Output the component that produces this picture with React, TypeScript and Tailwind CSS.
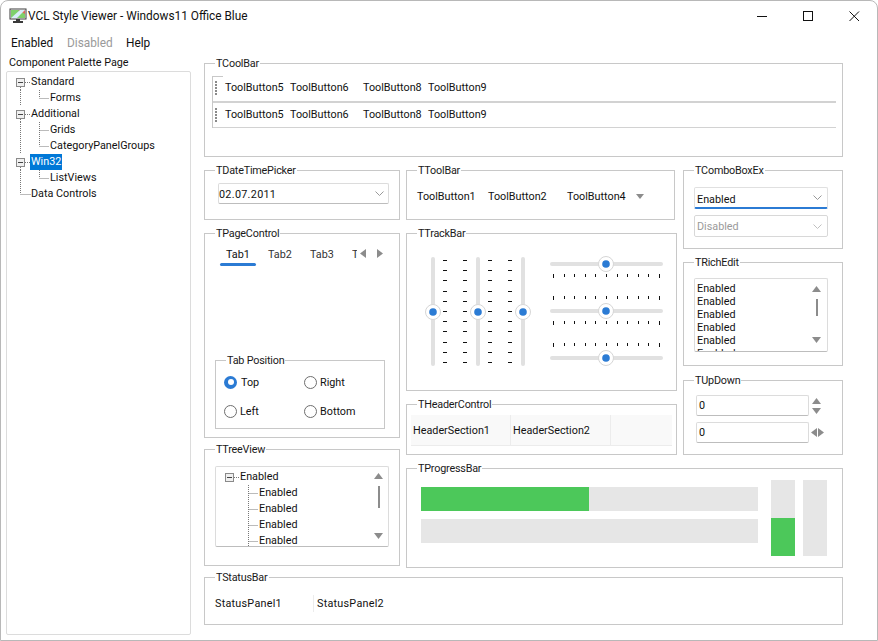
import React from "react";

function Group({ title, className, children }: { title: string; className: string; children?: React.ReactNode }) {
  return (
    <div className={`relative border border-[#c8c8c8] ${className}`}>
      <span className="absolute left-[10px] top-[-8px] h-[15px] bg-white px-px text-[10.8px] leading-[15px] tracking-[-0.2px] text-[#1a1a1a]">{title}</span>
      {children}
    </div>
  );
}

function Expander() {
  return (
    <g>
      <rect x="0.5" y="3.5" width="8" height="8" fill="#f0f0f0" stroke="#8a8a8a" />
      <line x1="2" y1="7.5" x2="7" y2="7.5" stroke="#444" />
    </g>
  );
}

const Dots = (p: { x1: number; y1: number; x2: number; y2: number }) => (
  <line {...p} stroke="#777" strokeDasharray="1 1" />
);

function RootRow({ label, selected, line, last, indent = 9, w = 24 }: { label: string; selected?: boolean; line?: boolean; last?: boolean; indent?: number; w?: number }) {
  return (
    <div className="flex h-4 items-center">
      <svg width={w} height="16" className="shrink-0">
        {last ? (
          <>
            <Dots x1={13.5} y1={0} x2={13.5} y2={8} />
            <Dots x1={13.5} y1={8.5} x2={w} y2={8.5} />
          </>
        ) : (
          <>
            {line && <Dots x1={13.5} y1={13} x2={13.5} y2={16} />}
            <Dots x1={18} y1={8.5} x2={w} y2={8.5} />
            <g transform={`translate(${indent} 1)`}><Expander /></g>
          </>
        )}
      </svg>
      <span className={`h-4 text-[10.8px] leading-4 ${selected ? "bg-[#0078d7] px-px text-white" : "text-[#111]"}`}>{label}</span>
    </div>
  );
}

function ChildRow({ label, outer, w = 43, inner = 32.5, outerX = 13.5, end }: { label: string; outer?: boolean; w?: number; inner?: number; outerX?: number; end?: boolean }) {
  return (
    <div className="flex h-4 items-center">
      <svg width={w} height="16" className="shrink-0">
        {outer && <Dots x1={outerX} y1={0} x2={outerX} y2={16} />}
        <Dots x1={inner} y1={0} x2={inner} y2={end ? 8 : 16} />
        <Dots x1={inner} y1={8.5} x2={w - 1} y2={8.5} />
      </svg>
      <span className="text-[10.8px] leading-4 text-[#111]">{label}</span>
    </div>
  );
}

function Chevron({ color = "#999999" }: { color?: string }) {
  return (
    <svg width="9" height="5" viewBox="0 0 9 5" className="shrink-0">
      <path d="M0.5 0.5 L4.5 4.5 L8.5 0.5" fill="none" stroke={color} />
    </svg>
  );
}

function Tri({ dir, className = "" }: { dir: "up" | "down" | "left" | "right"; className?: string }) {
  const vertical = dir === "up" || dir === "down";
  const w = vertical ? 9 : 6;
  const h = vertical ? 6 : 9;
  const d = {
    up: "M4.5 0 L9 6 L0 6 Z",
    down: "M0 0 L9 0 L4.5 6 Z",
    left: "M6 0 L6 9 L0 4.5 Z",
    right: "M0 0 L6 4.5 L0 9 Z",
  }[dir];
  return (
    <svg width={w} height={h} viewBox={`0 0 ${w} ${h}`} className={`shrink-0 ${className}`}>
      <path d={d} fill="#8c8c8c" />
    </svg>
  );
}

function Radio({ label, checked, className }: { label: string; checked?: boolean; className: string }) {
  return (
    <div className={`flex items-center ${className}`}>
      <span className={`flex h-[13px] w-[13px] shrink-0 items-center justify-center rounded-full ${checked ? "bg-[#2b7bd4]" : "border border-[#6e6e6e] bg-white"}`}>
        {checked && <span className="h-[6px] w-[6px] rounded-full bg-white" />}
      </span>
      <span className={`mt-[2px] text-[10.8px] leading-4 text-[#111] ${checked ? "ml-[4px]" : "ml-[3px]"}`}>{label}</span>
    </div>
  );
}

function Thumb({ cx, cy }: { cx: number; cy: number }) {
  return (
    <g>
      <circle cx={cx} cy={cy} r="7.5" fill="#fff" stroke="#d6d6d6" />
      <circle cx={cx} cy={cy} r="3.8" fill="#2b7bd4" />
    </g>
  );
}

function VerticalTracks() {
  const ys = [260, 270, 280, 291, 301, 311, 321, 331, 342, 352, 362];
  const tickXs = [443, 463, 488, 508];
  return (
    <svg width="112" height="125" viewBox="424 250 112 125" className="shrink-0">
      {[433, 478, 523].map((x) => (
        <rect key={x} x={x - 2} y="257" width="4" height="109" rx="2" fill="#e1e1e1" />
      ))}
      {tickXs.map((x) => ys.map((y) => <rect key={`${x}-${y}`} x={x} y={y} width="4" height="1" fill="#111" />))}
      {[433, 478, 523].map((x) => (
        <Thumb key={x} cx={x} cy={312} />
      ))}
    </svg>
  );
}

function HorizontalTracks() {
  const xs = [553, 564, 574, 585, 595, 606, 617, 627, 638, 648, 659];
  const rows = [274, 296, 321, 343];
  return (
    <svg width="124" height="125" viewBox="545 250 124 125" className="shrink-0">
      {[264, 311, 358].map((y) => (
        <rect key={y} x="550" y={y - 2} width="113" height="4" rx="2" fill="#e1e1e1" />
      ))}
      {rows.map((y) =>
        xs.map((x, i) => <rect key={`${x}-${y}`} x={x} y={y} width="1" height={i === 0 || i === 10 ? 4 : 3} fill="#111" />),
      )}
      {[264, 311, 358].map((y) => (
        <Thumb key={y} cx={606} cy={y} />
      ))}
    </svg>
  );
}

function ToolButtons() {
  return (
    <div className="flex text-[10.8px] leading-4 text-[#111]">
      <span className="w-[65px]">ToolButton5</span>
      <span className="w-[73px]">ToolButton6</span>
      <span className="w-[65px]">ToolButton8</span>
      <span>ToolButton9</span>
    </div>
  );
}

function Grip() {
  return (
    <svg width="2" height="15" className="ml-[2px] mr-[8px] shrink-0">
      <line x1="1" y1="0" x2="1" y2="15" stroke="#8a8a8a" strokeWidth="2" strokeDasharray="2 1" />
    </svg>
  );
}

function AppIcon() {
  return (
    <svg width="18" height="16" viewBox="0 0 18 16" className="shrink-0">
      <rect x="1" y="1" width="16" height="10" fill="#ffffff" stroke="#3a3a3a" />
      <path d="M2 2 H16 V10 H2 Z" fill="#7fd06a" />
      <path d="M9 2 H16 V6 Z" fill="#e0685a" />
      <path d="M2 10 L11 2 H16 L8 10 Z" fill="#d8ecf8" />
      <rect x="7" y="11" width="4" height="2" fill="#3a3a3a" />
      <rect x="4" y="13" width="10" height="2" fill="#3a3a3a" />
    </svg>
  );
}

export default function App() {
  return (
    <div className="flex h-[641px] w-[878px] flex-col overflow-hidden rounded-t-[8px] border border-[#b8b8b8] bg-white font-['Roboto',sans-serif] text-[10.8px] text-[#111]">
      {/* Title bar */}
      <div className="flex h-[30px] shrink-0 items-center">
        <div className="ml-[8px] flex items-center gap-[1px]">
          <AppIcon />
          <span className="text-[11.85px] leading-4 text-[#111]">VCL Style Viewer - Windows11 Office Blue</span>
        </div>
        <div className="ml-auto flex items-center">
          <svg width="11" height="11" viewBox="0 0 11 11" className="mr-[35px]"><line x1="0" y1="5.5" x2="10" y2="5.5" stroke="#111" /></svg>
          <svg width="11" height="11" viewBox="0 0 11 11" className="mr-[35px]"><rect x="0.5" y="0.5" width="9" height="9" fill="none" stroke="#111" /></svg>
          <svg width="11" height="11" viewBox="0 0 11 11" className="mr-[17px]"><path d="M0.5 0.5 L10 10 M10 0.5 L0.5 10" stroke="#111" fill="none" /></svg>
        </div>
      </div>
      {/* Menu */}
      <div className="flex h-[23px] shrink-0 items-center pl-[10px] text-[11.85px] leading-4">
        <span className="w-[56px]">Enabled</span>
        <span className="w-[59px] text-[#9a9a9a]">Disabled</span>
        <span>Help</span>
      </div>
      {/* Body */}
      <div className="flex flex-1 pl-[5px]">
        {/* Palette */}
        <div className="flex w-[185px] shrink-0 flex-col">
          <div className="h-[17px] pl-[3px] pt-px text-[10.8px] leading-4">Component Palette Page</div>
          <div className="h-[564px] rounded-[2px] border border-[#dcdcdc] pt-[2px]">
            <RootRow label="Standard" line />
            <ChildRow label="Forms" outer end />
            <RootRow label="Additional" line />
            <ChildRow label="Grids" outer />
            <ChildRow label="CategoryPanelGroups" outer end />
            <RootRow label="Win32" line selected w={23} />
            <ChildRow label="ListViews" outer end />
            <RootRow label="Data Controls" last />
          </div>
        </div>
        {/* Main */}
        <div className="ml-[13px] flex w-[639px] shrink-0 flex-col pt-[9px]">
          <Group title="TCoolBar" className="h-[94px] w-[639px] pl-[7px] pr-[6px] pt-[12px]">
            <div className="border-l border-[#c8c8c8]">
              <div className="h-px w-[10px] bg-[#c8c8c8]" />
              <div className="flex h-[24px] items-center pb-[2px]"><Grip /><ToolButtons /></div>
              <div className="h-[2px] bg-[#d2d2d2]" />
              <div className="flex h-[25px] items-center border-b border-[#d2d2d2]"><Grip /><ToolButtons /></div>
            </div>
          </Group>

          <div className="mt-[13px] flex gap-[6px]">
            {/* Column 1 */}
            <div className="flex w-[196px] shrink-0 flex-col">
              <Group title="TDateTimePicker" className="h-[50px] px-[13px] pt-[12px]">
                <div className="flex h-[21px] w-[171px] items-center justify-between rounded-[2px] border border-[#dcdcdc] border-b-[#bdbdbd] pr-[4px] text-[10.8px] tracking-[0.3px]">
                  <span className="mt-[4px]">02.07.2011</span>
                  <Chevron />
                </div>
              </Group>
              <Group title="TPageControl" className="mt-[13px] h-[205px] px-[10px]">
                <div className="relative flex h-[30px] items-center pl-[11px] pt-[11px] text-[10.8px] leading-4">
                  <span className="w-[42px] text-[#111]">Tab1</span>
                  <span className="w-[42px] text-[#333]">Tab2</span>
                  <span className="w-[42px] text-[#333]">Tab3</span>
                  <span className="w-[5px] overflow-hidden text-[#333]">Tab4</span>
                  <Tri dir="left" className="ml-[3px] mt-[-2px]" />
                  <Tri dir="right" className="ml-[11px] mt-[-2px]" />
                  <span className="absolute bottom-[-2px] left-[5px] h-[3px] w-[36px] rounded-full bg-[#2b7bd4]" />
                </div>
                <Group title="Tab Position" className="mt-[96px] h-[69px] w-[170px] pl-[8px] pt-[13px]">
                  <div className="grid grid-cols-[80px_1fr] gap-y-[13px]">
                    <Radio label="Top" checked className="h-4" />
                    <Radio label="Right" className="h-4" />
                    <Radio label="Left" className="h-4" />
                    <Radio label="Bottom" className="h-4" />
                  </div>
                </Group>
              </Group>
              <Group title="TTreeView" className="mt-[11px] h-[117px] px-[10px] pt-[16px]">
                <div className="relative h-[81px] overflow-hidden rounded-[2px] border border-[#dcdcdc] border-b-[#bdbdbd] pt-[2px]">
                  <RootRow label="Enabled" w={24} indent={9} />
                  <ChildRow label="Enabled" />
                  <ChildRow label="Enabled" />
                  <ChildRow label="Enabled" />
                  <ChildRow label="Enabled" />
                  <div className="absolute bottom-[7px] right-[5px] top-[6px] flex flex-col items-center">
                    <Tri dir="up" />
                    <span className="mt-[7px] h-[22px] w-[2px] bg-[#8c8c8c]" />
                    <span className="flex-1" />
                    <Tri dir="down" />
                  </div>
                </div>
              </Group>
            </div>

            {/* Columns 2 + 3 */}
            <div className="flex w-[437px] shrink-0 flex-col">
              <div className="flex gap-[6px]">
                <div className="flex w-[271px] shrink-0 flex-col">
                  <Group title="TToolBar" className="h-[50px] w-[269px] pl-[10px] pt-[18px]">
                    <div className="flex items-center text-[10.8px] leading-4">
                      <span className="w-[71px]">ToolButton1</span>
                      <span className="w-[79px]">ToolButton2</span>
                      <span className="w-[69px]">ToolButton4</span>
                      <svg width="8" height="5" viewBox="0 0 8 5" className="mt-[-1px]"><path d="M0 0 H8 L4 5 Z" fill="#8c8c8c" /></svg>
                    </div>
                  </Group>
                  <Group title="TTrackBar" className="mt-[13px] flex h-[158px] items-start pl-[17px] pt-[16px]">
                    <VerticalTracks />
                    <span className="w-[9px] shrink-0" />
                    <HorizontalTracks />
                  </Group>
                  <Group title="THeaderControl" className="mt-[13px] h-[51px] pl-[4px] pt-[10px]">
                    <div className="flex h-[31px] w-[261px] items-center border-b border-[#ececec] bg-[#f9f9f9] text-[10.8px] leading-4">
                      <span className="flex h-full w-[100px] items-center border-r border-[#ececec] pl-[2px] pt-[2px]">HeaderSection1</span>
                      <span className="flex h-full w-[100px] items-center border-r border-[#ececec] pl-[2px] pt-[2px]">HeaderSection2</span>
                    </div>
                  </Group>
                </div>
                <div className="flex w-[160px] shrink-0 flex-col">
                  <Group title="TComboBoxEx" className="h-[79px] px-[10px] pt-[16px]">
                    <div className="flex h-[22px] w-[134px] items-center justify-between rounded-[2px] border border-[#e0e0e0] border-b-2 border-b-[#2b7bd4] pl-[2px] pr-[5px] text-[10.8px]">
                      <span className="mt-[6px]">Enabled</span>
                      <Chevron />
                    </div>
                    <div className="mt-[6px] flex h-[22px] w-[134px] items-center justify-between rounded-[2px] border border-[#d8d8d8] pl-[2px] pr-[5px] text-[10.8px] text-[#9a9a9a]">
                      <span className="mt-[2px]">Disabled</span>
                      <Chevron color="#c0c0c0" />
                    </div>
                  </Group>
                  <Group title="TRichEdit" className="mt-[13px] h-[104px] px-[10px] pt-[15px]">
                    <div className="relative h-[74px] w-[134px] overflow-hidden rounded-[2px] border border-[#dcdcdc] border-b-[#bdbdbd] pl-[2px] pt-[3px] text-[10.8px] leading-[13px]">
                      <div>Enabled</div>
                      <div>Enabled</div>
                      <div>Enabled</div>
                      <div>Enabled</div>
                      <div>Enabled</div>
                      <div>Enabled</div>
                      <div className="absolute bottom-[8px] right-[6px] top-[7px] flex flex-col items-center">
                        <Tri dir="up" />
                        <span className="mt-[7px] h-[17px] w-[2px] bg-[#8c8c8c]" />
                        <span className="flex-1" />
                        <Tri dir="down" />
                      </div>
                    </div>
                  </Group>
                  <Group title="TUpDown" className="mt-[14px] h-[75px] pl-[12px] pt-[14px]">
                    <div className="flex items-start">
                      <div className="flex h-[21px] w-[113px] items-center rounded-[2px] border border-[#dcdcdc] border-b-[#bdbdbd] pl-[2px] pt-[2px] text-[10.8px]">0</div>
                      <div className="ml-[3px] flex flex-col items-center gap-[4px] pt-[3px]">
                        <Tri dir="up" />
                        <Tri dir="down" />
                      </div>
                    </div>
                    <div className="mt-[6px] flex items-center">
                      <div className="flex h-[21px] w-[113px] items-center rounded-[2px] border border-[#dcdcdc] border-b-[#bdbdbd] pl-[2px] pt-[2px] text-[10.8px]">0</div>
                      <div className="ml-[2px] flex items-center gap-px">
                        <Tri dir="left" />
                        <Tri dir="right" />
                      </div>
                    </div>
                  </Group>
                </div>
              </div>
              <Group title="TProgressBar" className="mt-[13px] flex h-[100px] w-[437px] pl-[14px] pt-[11px]">
                <div className="flex w-[337px] shrink-0 flex-col gap-[8px] pt-[7px]">
                  <div className="h-[24px] bg-[#e6e6e6]"><div className="h-full w-[168px] bg-[#4cc85a]" /></div>
                  <div className="h-[24px] bg-[#e6e6e6]" />
                </div>
                <div className="ml-[13px] flex h-[76px] w-[24px] shrink-0 flex-col justify-end bg-[#e6e6e6]"><div className="h-[38px] bg-[#4cc85a]" /></div>
                <div className="ml-[8px] h-[76px] w-[24px] shrink-0 bg-[#e6e6e6]" />
              </Group>
            </div>
          </div>

          <Group title="TStatusBar" className="mt-[9px] flex h-[48px] w-[639px] items-center pl-[10px] pt-[4px] text-[10.8px] leading-4 tracking-[0.25px]">
            <span className="mt-[2px] w-[98px]">StatusPanel1</span>
            <span className="h-[17px] w-px bg-[#ececec]" />
            <span className="ml-[3px] mt-[2px]">StatusPanel2</span>
          </Group>
        </div>
      </div>
    </div>
  );
}
